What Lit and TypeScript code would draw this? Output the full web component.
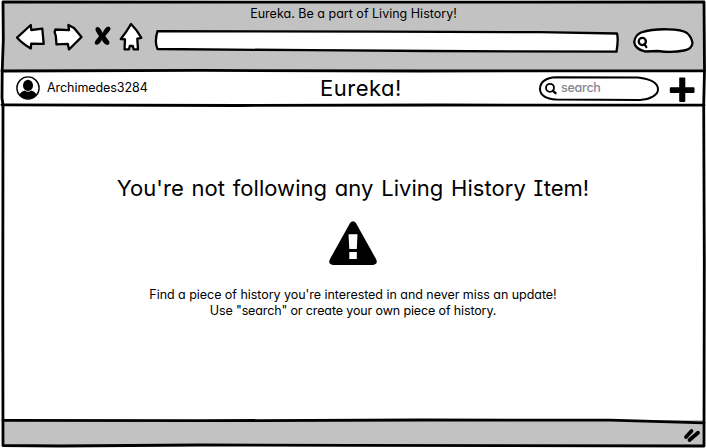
import { LitElement, html, css, svg } from "lit";
import { customElement } from "lit/decorators.js";

const backArrow = svg`<path d="M17 37.6 L30.8 25 L31.2 30 L42.3 28.6 L43.7 43.8 L31.2 43.6 L30.8 48.5 Q22 43.5 17 37.6 Z"/>`;
const forwardArrow = svg`<path d="M55.5 29.5 L69 30.2 L68.4 25 L74 28 L81.5 37 L69 49.5 L67.8 43.8 L56.5 44.3 L55.8 36 L54.6 32 Z"/>`;
const home = svg`<path d="M131 24 Q137 30 141.3 37.8 L137.3 38.6 L138 49.3 L133.6 49.3 L132.8 46 L129.8 46 L129 49.3 L124.5 49.3 L125 39.4 L120.8 39 Q126.5 32 131 24 Z"/>`;

@customElement("app-root")
export class AppRoot extends LitElement {
  static styles = css`
    :host {
      display: block;
      width: 706px;
      height: 448px;
      background: #fff;
      color: #000;
      font-family: Inter, "Liberation Sans", sans-serif;
      font-feature-settings: "cv11";
      font-size: 12.5px;
    }
    .window {
      position: relative;
      display: grid;
      grid-template-rows: 71px 34px 315px 26px;
      height: 446px;
      box-sizing: border-box;
    }
    .chrome, .status {
      background: #c2c2c2;
      margin: 0 2px 0 3px;
    }
    .chrome { margin-top: 2px; }
    .caption {
      margin: 4px 0 0 0;
      height: 16px;
      line-height: 16px;
      text-align: center;
      letter-spacing: 0.01px;
    }
    .bar {
      display: grid;
      grid-template-columns: 304px 96px 1fr;
      align-items: center;
      padding: 0 11px 0 16px;
    }
    .user { display: flex; align-items: center; gap: 7px; }
    .name { letter-spacing: -0.06px; line-height: 16px; margin-bottom: 1px; }
    .brand { font-size: 22px; line-height: 34px; letter-spacing: 0.5px; }
    .tools { display: flex; justify-content: flex-end; align-items: center; gap: 10px; }
    .plus { margin-top: 2px; }
    .search {
      display: flex;
      width: 98px;
      height: 24px;
      line-height: 24px;
      padding-left: 22px;
      color: #858590;
      font-weight: 500;
      letter-spacing: -0.25px;
    }
    .content {
      display: flex;
      flex-direction: column;
      align-items: center;
      padding-top: 69px;
      box-sizing: border-box;
    }
    h1 {
      margin: 0;
      font-size: 22px;
      font-weight: 400;
      font-feature-settings: "cv11", "cv08";
      line-height: 28px;
      letter-spacing: 0.04px;
      word-spacing: 1.5px;
      white-space: nowrap;
    }
    .warning { margin: 19px 0 22px; }
    .hint { text-align: center; line-height: 16px; white-space: nowrap; letter-spacing: -0.04px; }
    .hint div + div { letter-spacing: -0.13px; }
    svg { display: block; flex: none; }
    .ink { position: absolute; left: 0; top: 0; pointer-events: none; }
  `;

  private ink() {
    return html`<svg class="ink" width="706" height="448" viewBox="0 0 706 448"
      fill="none" stroke="#000" stroke-linecap="round" stroke-linejoin="round">
      <g stroke-width="2.8">
        <path d="M3 2 L350 2.2 L704 2 L704.5 70 L703.7 105 L704.3 260 L704 446 L350 445.3 L200 445 L60 446 L3 445.5 L2.8 300 L3 105 L2 98 L2.2 71 L3.3 40 Z"/>
        <path d="M2 71 L200 70.4 L420 71 L704 70.8"/>
        <path d="M2 104.8 L240 105.5 L440 105 L704 105.2"/>
        <path d="M3 420.3 L200 420.7 L420 420 L610 420.2 L704 422.8"/>
      </g>
      <g fill="#fff" stroke-width="2.3">
        ${backArrow}${forwardArrow}${home}
        <path d="M157.5 31.2 L380 31.7 L540 32.2 L617 33.5 Q618.6 39 616.5 51.7 L430 51 L310 50.2 L157.5 49 Q154.2 42 157.5 31.2 Z"/>
        <path d="M641 32.5 Q653 28.8 668 29.3 Q682 29.5 687 33 Q691.5 37 692.5 43 Q692 49 684 50.5 Q672 53 658 51 L645 51.5 Q635 49 634.2 42 Q635 35 641 32.5 Z"/>
      </g>
      <path stroke="none" fill="#000" d="M96 27.5 Q99.5 25 102.6 33 Q105 27 108.5 26.5 Q112 27.5 109.5 31 L105.3 36 L109.3 41.5 Q110 44.5 107.5 45 Q104.5 44.8 101.8 40 Q99.5 45 96 44.8 Q93.5 43.5 96 40 L99 36.2 L95.8 31 Q95 28.8 96 27.5 Z"/>
      <g stroke-width="2">
        <circle stroke-width="2.3" cx="642.3" cy="41.5" r="3.6"/><path stroke-width="2.3" d="M644.5 44 L646.3 47"/>
        <path d="M556 77.2 L638 77.6 C650 79 658 83 658 89.5 C658 95 650 99.5 640 99.9 L556 99.5 C546 99 540 95 540 89 C540 82 546 77.5 556 77.2 Z"/>
        <circle stroke-width="1.8" cx="550" cy="87.8" r="4"/><path stroke-width="2.4" d="M553 90.8 L555.5 93.2"/>
      </g>
      <path stroke-width="3.8" d="M686 437 L691.5 431 M689.5 440 L698 432.8"/>
    </svg>`;
  }

  render() {
    return html`<div class="window">
      <header class="chrome"><div class="caption">Eureka. Be a part of Living History!</div></header>
      <nav class="bar">
        <div class="user">
          <svg width="24" height="24" viewBox="0 0 24 24">
            <clipPath id="face"><circle cx="12" cy="12" r="11"/></clipPath>
            <circle cx="12" cy="12" r="11.1" fill="#fff" stroke="#000" stroke-width="1.4"/>
            <g clip-path="url(#face)"><ellipse cx="12" cy="9.4" rx="5" ry="5.6"/>
            <path d="M3 20 Q4 15.5 9 14.5 Q12 17 15 14.5 Q20 15.5 21 20 L17 24 H7 Z"/></g>
          </svg>
          <span class="name">Archimedes3284</span>
        </div>
        <div class="brand">Eureka!</div>
        <div class="tools">
          <div class="search">search</div>
          <svg class="plus" width="26" height="26" viewBox="0 0 26 26"><path d="M10.7 1.5 H15.3 Q16.3 1.5 16.3 2.5 V11.3 H24.5 Q25.5 11.3 25.5 12.3 V15.9 Q25.5 16.9 24.5 16.9 H16.3 V25 Q16.3 26 15.3 26 H11.2 Q10.2 26 10.2 25 V16.9 H1.8 Q.8 16.9 .8 15.9 V12.3 Q.8 11.3 1.8 11.3 H10.2 V2.5 Q10.2 1.5 10.7 1.5Z"/></svg>
        </div>
      </nav>
      <main class="content">
        <h1>You're not following any Living History Item!</h1>
        <svg class="warning" width="48" height="44" viewBox="0 0 48 44">
          <path d="M21.2 1.8 Q24 -1.2 26.8 1.8 L47 38 Q49.5 43 44 44 H4 Q-1.5 43 1 38 Z"/>
          <path fill="#fff" d="M19.5 13.2 H28.5 L27.8 28 H20.3 Z M20.3 31 H27.8 V38 H20.3 Z"/>
        </svg>
        <div class="hint">
          <div>Find a piece of history you're interested in and never miss an update!</div>
          <div>Use "search" or create your own piece of history.</div>
        </div>
      </main>
      <footer class="status"></footer>
      ${this.ink()}
    </div>`;
  }
}
